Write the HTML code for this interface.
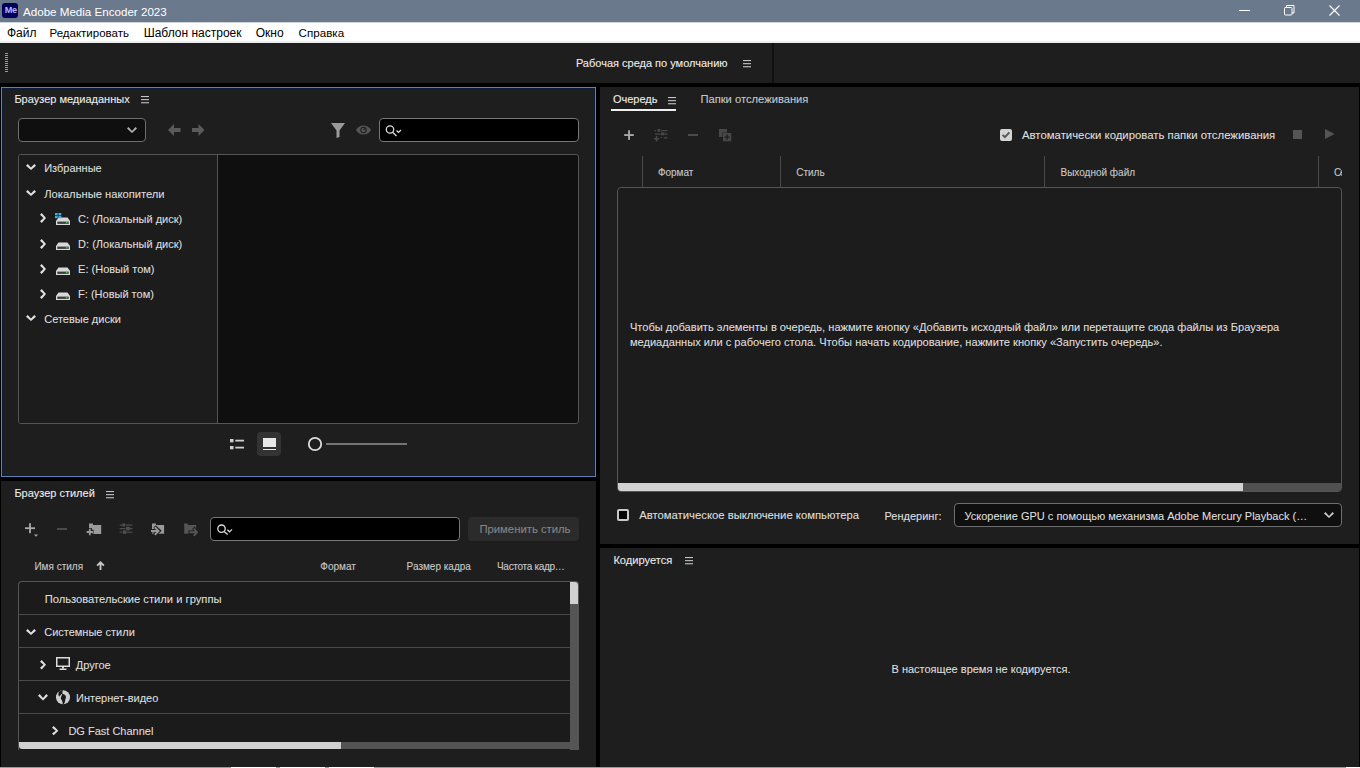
<!DOCTYPE html>
<html><head><meta charset="utf-8">
<style>
*{box-sizing:border-box;margin:0;padding:0}
html,body{width:1360px;height:768px;overflow:hidden;background:#000;font-family:"Liberation Sans",sans-serif;position:relative}
.a{position:absolute}
svg.a{overflow:visible}
.t{position:absolute;white-space:nowrap;color:#d8d8d8;font-size:11px;line-height:1;-webkit-text-stroke:0.1px currentColor}
.n{-webkit-text-stroke:0}
</style></head><body>
<div class="a" style="left:0px;top:0px;width:1360px;height:22px;background:#6b798d"></div>
<div class="a" style="left:2px;top:3px;width:16px;height:15px;background:#00005b;border-radius:3px"></div>
<div class="t n" style="left:4.7px;top:6.41px;font-size:9.2px;color:#b4b4ff;font-weight:bold;letter-spacing:-0.4px">Me</div>
<div class="t n" style="left:23px;top:5.78px;font-size:11.6px;color:#ffffff;">Adobe Media Encoder 2023</div>
<div class="a" style="left:1239px;top:10px;width:11px;height:1px;background:#fff"></div>
<svg class="a" style="left:1284px;top:5px;" width="11" height="11" viewBox="0 0 11 11"><rect x="0.5" y="2.5" width="7.5" height="7.5" rx="0.8" fill="none" stroke="#fff" stroke-width="1"/><path d="M2.5,2.5 V0.5 H10 V8 H8" fill="none" stroke="#fff" stroke-width="1"/></svg>
<svg class="a" style="left:1329px;top:5px;" width="11" height="11" viewBox="0 0 11 11"><path d="M0.5,0.5 L10.5,10.5 M10.5,0.5 L0.5,10.5" stroke="#fff" stroke-width="1.1"/></svg>
<div class="a" style="left:0px;top:22px;width:1360px;height:21px;background:#ffffff"></div>
<div class="a" style="left:0px;top:22px;width:1360px;height:1px;background:#d0d5db"></div>
<div class="a" style="left:0px;top:41px;width:1360px;height:2px;background:#eeeeee"></div>
<div class="t n" style="left:6.9px;top:26.74px;font-size:12px;color:#000;">Файл</div>
<div class="t n" style="left:49.5px;top:27.57px;font-size:11.5px;color:#000;">Редактировать</div>
<div class="t n" style="left:143.7px;top:26.74px;font-size:12px;color:#000;">Шаблон настроек</div>
<div class="t n" style="left:255.7px;top:26.74px;font-size:12px;color:#000;">Окно</div>
<div class="t n" style="left:298.59999999999997px;top:27.08px;font-size:11.6px;color:#000;">Справка</div>
<div class="a" style="left:0px;top:43px;width:1360px;height:40px;background:#1e1e1e"></div>
<div class="a" style="left:5px;top:53px;width:3px;height:1px;background:#9a9a9a"></div>
<div class="a" style="left:5px;top:55px;width:3px;height:1px;background:#9a9a9a"></div>
<div class="a" style="left:5px;top:57px;width:3px;height:1px;background:#9a9a9a"></div>
<div class="a" style="left:5px;top:59px;width:3px;height:1px;background:#9a9a9a"></div>
<div class="a" style="left:5px;top:61px;width:3px;height:1px;background:#9a9a9a"></div>
<div class="a" style="left:5px;top:63px;width:3px;height:1px;background:#9a9a9a"></div>
<div class="a" style="left:5px;top:65px;width:3px;height:1px;background:#9a9a9a"></div>
<div class="a" style="left:5px;top:67px;width:3px;height:1px;background:#9a9a9a"></div>
<div class="a" style="left:5px;top:69px;width:3px;height:1px;background:#9a9a9a"></div>
<div class="a" style="left:5px;top:71px;width:3px;height:1px;background:#9a9a9a"></div>
<div class="t " style="left:575.9px;top:57.59px;font-size:11px;color:#ececec;">Рабочая среда по умолчанию</div>
<svg class="a" style="left:743px;top:60px;" width="8" height="7" viewBox="0 0 8 7"><rect x="0" y="0" width="8" height="1.1" fill="#c4c4c4"/><rect x="0" y="3.1" width="8" height="1.1" fill="#c4c4c4"/><rect x="0" y="6.2" width="8" height="1.1" fill="#c4c4c4"/></svg>
<div class="a" style="left:772px;top:43px;width:2px;height:40px;background:#111"></div>
<div class="a" style="left:1px;top:87px;width:595px;height:390px;background:#1e1e1e;border:1px solid #5a82bd;box-shadow:inset 0 0 0 1px #0c1d3e"></div>
<div class="t " style="left:14.4px;top:93.59px;font-size:11px;color:#ececec;">Браузер медиаданных</div>
<svg class="a" style="left:141px;top:96px;" width="8" height="7" viewBox="0 0 8 7"><rect x="0" y="0" width="8" height="1.1" fill="#c4c4c4"/><rect x="0" y="3.1" width="8" height="1.1" fill="#c4c4c4"/><rect x="0" y="6.2" width="8" height="1.1" fill="#c4c4c4"/></svg>
<div class="a" style="left:18px;top:118px;width:128px;height:24px;background:#0f0f0f;border:1px solid #6e6e6e;border-radius:4px"></div>
<svg class="a" style="left:127px;top:127px;" width="10" height="6" viewBox="0 0 10 6"><path d="M0,1.44 L1.44,0 L5.0,3.912 L8.56,0 L10,1.44 L5.0,6 Z" fill="#b4b4b4"/></svg>
<svg class="a" style="left:168px;top:124px;" width="13" height="12" viewBox="0 0 13 12"><path d="M0,6 L6,0 L6,4 L12.5,4 L12.5,8 L6,8 L6,12 Z" fill="#5a5a5a"/></svg>
<svg class="a" style="left:192px;top:124px;" width="13" height="12" viewBox="0 0 13 12"><path d="M12.5,6 L6.5,0 L6.5,4 L0,4 L0,8 L6.5,8 L6.5,12 Z" fill="#5a5a5a"/></svg>
<svg class="a" style="left:331px;top:123px;" width="14" height="15" viewBox="0 0 14 15"><path d="M0,0 H14 L8.5,7.5 V14 L5.5,15 V7.5 Z" fill="#9a9a9a"/></svg>
<svg class="a" style="left:356px;top:125px;" width="15" height="10" viewBox="0 0 15 10"><path d="M0,5 C3,-1 12,-1 15,5 C12,11 3,11 0,5 Z" fill="#555"/><circle cx="7.5" cy="5" r="3.2" fill="#1e1e1e"/><circle cx="7.5" cy="5" r="2.2" fill="#555"/><circle cx="8.3" cy="4.2" r="0.9" fill="#1e1e1e"/></svg>
<div class="a" style="left:379px;top:118px;width:200px;height:24px;background:#000;border:1px solid #777;border-radius:4px"></div>
<svg class="a" style="left:385px;top:124px;" width="20" height="14" viewBox="0 0 20 14"><circle cx="5" cy="5.5" r="3.7" fill="none" stroke="#ddd" stroke-width="1.3"/><path d="M7.6,8.2 L11.5,12" stroke="#ddd" stroke-width="1.3"/><polyline points="11.5,6.5 13.5,8.5 16,6" fill="none" stroke="#ddd" stroke-width="1.2"/></svg>
<div class="a" style="left:18px;top:154px;width:561px;height:270px;background:#0f0f0f;border:1px solid #555;border-radius:3px;overflow:hidden"></div>
<div class="a" style="left:19px;top:155px;width:198px;height:268px;background:#1c1c1c;border-radius:3px 0 0 3px"></div>
<div class="a" style="left:217px;top:155px;width:1px;height:268px;background:#555"></div>
<svg class="a" style="left:26px;top:164px;" width="10" height="6" viewBox="0 0 10 6"><path d="M0,1.728 L1.728,0 L5.0,3.4944 L8.272,0 L10,1.728 L5.0,6 Z" fill="#e0e0e0"/></svg>
<div class="t " style="left:44.2px;top:162.69px;font-size:11px;color:#dedede;">Избранные</div>
<svg class="a" style="left:26px;top:190px;" width="10" height="6" viewBox="0 0 10 6"><path d="M0,1.728 L1.728,0 L5.0,3.4944 L8.272,0 L10,1.728 L5.0,6 Z" fill="#e0e0e0"/></svg>
<div class="t " style="left:44.2px;top:189.02px;font-size:11.2px;color:#dedede;">Локальные накопители</div>
<svg class="a" style="left:40px;top:213.4px;" width="6" height="10" viewBox="0 0 6 10"><path d="M1.728,0 L6,5.0 L1.728,10 L0,8.272 L3.4944,5.0 L0,1.728 Z" fill="#e0e0e0"/></svg>
<svg class="a" style="left:56px;top:216.9px;" width="14" height="8" viewBox="0 0 14 8"><path d="M2.5,0.5 H11.5 L14,4 V8 H0 V4 Z" fill="#d8d8d8"/><rect x="1.3" y="4.6" width="11.4" height="2.3" fill="#3c3c3c"/><rect x="9.8" y="5.1" width="1.6" height="1.3" fill="#4ed05e"/></svg>
<svg class="a" style="left:54.7px;top:212.6px;" width="7" height="6" viewBox="0 0 7 6"><g fill="#3aaedc"><rect x="0" y="0" width="2.7" height="2.3"/><rect x="3.4" y="0" width="2.9" height="2.3"/><rect x="0" y="2.9" width="2.7" height="2.3"/><rect x="3.4" y="2.9" width="2.9" height="2.3"/></g></svg>
<div class="t " style="left:78.1px;top:213.59px;font-size:11px;color:#dedede;">C: (Локальный диск)</div>
<svg class="a" style="left:40px;top:238.6px;" width="6" height="10" viewBox="0 0 6 10"><path d="M1.728,0 L6,5.0 L1.728,10 L0,8.272 L3.4944,5.0 L0,1.728 Z" fill="#e0e0e0"/></svg>
<svg class="a" style="left:56px;top:242.1px;" width="14" height="8" viewBox="0 0 14 8"><path d="M2.5,0.5 H11.5 L14,4 V8 H0 V4 Z" fill="#d8d8d8"/><rect x="1.3" y="4.6" width="11.4" height="2.3" fill="#3c3c3c"/><rect x="9.8" y="5.1" width="1.6" height="1.3" fill="#4ed05e"/></svg>
<div class="t " style="left:78.1px;top:238.79px;font-size:11px;color:#dedede;">D: (Локальный диск)</div>
<svg class="a" style="left:40px;top:263.8px;" width="6" height="10" viewBox="0 0 6 10"><path d="M1.728,0 L6,5.0 L1.728,10 L0,8.272 L3.4944,5.0 L0,1.728 Z" fill="#e0e0e0"/></svg>
<svg class="a" style="left:56px;top:267.3px;" width="14" height="8" viewBox="0 0 14 8"><path d="M2.5,0.5 H11.5 L14,4 V8 H0 V4 Z" fill="#d8d8d8"/><rect x="1.3" y="4.6" width="11.4" height="2.3" fill="#3c3c3c"/><rect x="9.8" y="5.1" width="1.6" height="1.3" fill="#4ed05e"/></svg>
<div class="t " style="left:78.1px;top:263.99px;font-size:11px;color:#dedede;">E: (Новый том)</div>
<svg class="a" style="left:40px;top:288.5px;" width="6" height="10" viewBox="0 0 6 10"><path d="M1.728,0 L6,5.0 L1.728,10 L0,8.272 L3.4944,5.0 L0,1.728 Z" fill="#e0e0e0"/></svg>
<svg class="a" style="left:56px;top:292px;" width="14" height="8" viewBox="0 0 14 8"><path d="M2.5,0.5 H11.5 L14,4 V8 H0 V4 Z" fill="#d8d8d8"/><rect x="1.3" y="4.6" width="11.4" height="2.3" fill="#3c3c3c"/><rect x="9.8" y="5.1" width="1.6" height="1.3" fill="#4ed05e"/></svg>
<div class="t " style="left:78.1px;top:288.69px;font-size:11px;color:#dedede;">F: (Новый том)</div>
<svg class="a" style="left:26px;top:315px;" width="10" height="6" viewBox="0 0 10 6"><path d="M0,1.728 L1.728,0 L5.0,3.4944 L8.272,0 L10,1.728 L5.0,6 Z" fill="#e0e0e0"/></svg>
<div class="t " style="left:44.2px;top:313.59px;font-size:11px;color:#dedede;">Сетевые диски</div>
<svg class="a" style="left:230px;top:439px;" width="15" height="11" viewBox="0 0 15 11"><rect x="0" y="0" width="3.5" height="3.3" fill="#d0d0d0"/><rect x="0" y="7" width="3.5" height="3.3" fill="#d0d0d0"/><rect x="5.3" y="0.7" width="8.7" height="1.8" fill="#d0d0d0"/><rect x="5.3" y="7.7" width="8.7" height="1.8" fill="#d0d0d0"/></svg>
<div class="a" style="left:257px;top:432px;width:24px;height:24px;background:#333;border-radius:4px"></div>
<div class="a" style="left:263px;top:438px;width:12.5px;height:9px;background:#e8e8e8"></div>
<div class="a" style="left:263px;top:448.5px;width:12.5px;height:1.8px;background:#e8e8e8"></div>
<svg class="a" style="left:307px;top:436px;" width="16" height="16" viewBox="0 0 16 16"><circle cx="8" cy="8" r="6.2" fill="none" stroke="#dcdcdc" stroke-width="1.8"/></svg>
<div class="a" style="left:326px;top:443px;width:81px;height:2px;background:#747474"></div>
<div class="a" style="left:1px;top:481px;width:595px;height:287px;background:#1e1e1e"></div>
<div class="t " style="left:14.4px;top:487.89px;font-size:11px;color:#ececec;">Браузер стилей</div>
<svg class="a" style="left:106px;top:490.6px;" width="8" height="7" viewBox="0 0 8 7"><rect x="0" y="0" width="8" height="1.1" fill="#c4c4c4"/><rect x="0" y="3.1" width="8" height="1.1" fill="#c4c4c4"/><rect x="0" y="6.2" width="8" height="1.1" fill="#c4c4c4"/></svg>
<svg class="a" style="left:25px;top:523px;" width="14" height="15" viewBox="0 0 14 15"><rect x="0" y="4.3" width="10" height="1.8" fill="#aaa"/><rect x="4.1" y="0.2" width="1.8" height="10" fill="#aaa"/><path d="M9,11.5 H13 L11,13.8 Z" fill="#aaa"/></svg>
<div class="a" style="left:57px;top:528.2px;width:10px;height:2px;background:#4a4a4a"></div>
<svg class="a" style="left:84px;top:518px;" width="120" height="24" viewBox="0 0 120 24"><g fill="#9a9a9a"><rect x="5" y="5.5" width="4" height="1.5"/><rect x="5" y="7" width="12.2" height="9" /></g><path d="M2,13.8 H9.5 M5.8,10 V17.6" stroke="#1e1e1e" stroke-width="4"/><path d="M2.6,14 H9 M5.8,10.8 V17.2" stroke="#9a9a9a" stroke-width="1.8"/><g fill="#4c4c4c"><rect x="35.7" y="6.5" width="12.7" height="1.2"/><rect x="35.7" y="10" width="12.7" height="1.2"/><rect x="35.7" y="13.6" width="12.7" height="1.2"/><rect x="38.4" y="5.2" width="2.8" height="3.6" fill="#1e1e1e"/><rect x="38.4" y="5.4" width="2.6" height="3.2"/><rect x="41.4" y="8.6" width="4.5" height="4" fill="#1e1e1e"/><rect x="41.9" y="8.8" width="4" height="3.6"/><rect x="38.3" y="12.1" width="4.3" height="4" fill="#1e1e1e"/><rect x="38.8" y="12.3" width="3.6" height="3.6"/></g><g fill="#9a9a9a"><rect x="68" y="5.5" width="4" height="1.5"/><rect x="68" y="7" width="12.1" height="8.7"/></g><path d="M66,12.8 H71.5 M70.5,8.5 L75.2,12.8 L70.5,17" stroke="#1e1e1e" stroke-width="3.4" fill="none"/><path d="M67,13 H73.5 M70.8,9.2 L74.6,13 L70.8,16.8" stroke="#9a9a9a" stroke-width="1.8" fill="none"/><g fill="#555"><rect x="100.2" y="5.5" width="3.6" height="1.5"/><rect x="100.2" y="7" width="12" height="8.7"/></g><path d="M104.5,14.2 H111.5 M109.3,9.8 L113.6,14.2 L109.3,18.6" stroke="#1e1e1e" stroke-width="3.4" fill="none"/><path d="M105.5,14.2 H112 M109.8,10.5 L113,14.2 L109.8,17.8" stroke="#555" stroke-width="1.9" fill="none"/></svg>
<div class="a" style="left:210px;top:517px;width:250px;height:24px;background:#000;border:1px solid #777;border-radius:4px"></div>
<svg class="a" style="left:216px;top:523px;" width="20" height="14" viewBox="0 0 20 14"><circle cx="5.5" cy="5.7" r="3.7" fill="none" stroke="#ddd" stroke-width="1.3"/><path d="M8.1,8.4 L11.7,11.5" stroke="#ddd" stroke-width="1.3"/><polyline points="11.3,6.8 13.5,8.8 16,6.3" fill="none" stroke="#ddd" stroke-width="1.2"/></svg>
<div class="a" style="left:468px;top:517px;width:111px;height:24px;background:#2b2b2b;border-radius:4px"></div>
<div class="t " style="left:479.4px;top:523.63px;font-size:11.3px;color:#858585;">Применить стиль</div>
<div class="t " style="left:34.4px;top:562.33px;font-size:10px;color:#c8c8c8;">Имя стиля</div>
<svg class="a" style="left:96px;top:561px;" width="9" height="10" viewBox="0 0 9 10"><path d="M4.5,0 L8.5,4 L7.2,5.2 L5.4,3.4 V9 H3.6 V3.4 L1.8,5.2 L0.5,4 Z" fill="#c8c8c8"/></svg>
<div class="t " style="left:320.3px;top:562.33px;font-size:10px;color:#c8c8c8;">Формат</div>
<div class="t " style="left:406.6px;top:562.33px;font-size:10px;color:#c8c8c8;">Размер кадра</div>
<div class="t " style="left:497px;top:562.33px;font-size:10px;color:#c8c8c8;letter-spacing:-0.3px">Частота кадр…</div>
<div class="a" style="left:18px;top:581px;width:561px;height:169px;background:#1b1b1b;border:1px solid #555;border-radius:4px 4px 0 0;border-bottom:none"></div>
<div class="a" style="left:19px;top:614px;width:551px;height:1px;background:#4a4a4a"></div>
<div class="a" style="left:19px;top:647px;width:551px;height:1px;background:#4a4a4a"></div>
<div class="a" style="left:19px;top:680px;width:551px;height:1px;background:#4a4a4a"></div>
<div class="a" style="left:19px;top:713px;width:551px;height:1px;background:#4a4a4a"></div>
<div class="t " style="left:44.7px;top:593.52px;font-size:11.2px;color:#dedede;">Пользовательские стили и группы</div>
<svg class="a" style="left:26px;top:629px;" width="10" height="6" viewBox="0 0 10 6"><path d="M0,1.728 L1.728,0 L5.0,3.4944 L8.272,0 L10,1.728 L5.0,6 Z" fill="#e0e0e0"/></svg>
<div class="t " style="left:44.2px;top:626.69px;font-size:11px;color:#dedede;">Системные стили</div>
<svg class="a" style="left:40px;top:659.5px;" width="6" height="9.5" viewBox="0 0 6 9.5"><path d="M1.728,0 L6,4.75 L1.728,9.5 L0,7.772 L3.4944,4.75 L0,1.728 Z" fill="#e0e0e0"/></svg>
<svg class="a" style="left:56px;top:657px;" width="14" height="13" viewBox="0 0 14 13"><rect x="0.75" y="0.75" width="12.5" height="8.5" fill="none" stroke="#dcdcdc" stroke-width="1.5"/><rect x="6" y="9.5" width="2" height="2" fill="#dcdcdc"/><rect x="3.5" y="11.5" width="7" height="1.5" fill="#dcdcdc"/></svg>
<div class="t " style="left:75.7px;top:659.89px;font-size:11px;color:#dedede;">Другое</div>
<svg class="a" style="left:38px;top:693.6px;" width="10" height="6.6" viewBox="0 0 10 6.6"><path d="M0,1.728 L1.728,0 L5.0,4.0944 L8.272,0 L10,1.728 L5.0,6.6 Z" fill="#e0e0e0"/></svg>
<svg class="a" style="left:56px;top:690px;" width="14" height="14" viewBox="0 0 14 14"><circle cx="7" cy="7.2" r="7" fill="#cfcfcf"/><path d="M2.8,1.8 C4.2,0.7 5.6,0.2 7,0.2 C6.5,1.2 6.2,2.2 6.6,3.2 C5.6,4.2 4.2,5 3,6.8 C2.3,5.2 2.2,3.5 2.8,1.8 Z" fill="#1b1b1b"/><path d="M5.8,3.6 C7.4,4.1 9.5,4.8 9.9,6.4 C10.3,8 9.1,9 9.2,10.6 C9.2,12 8.4,13.2 7.6,14.4 L6.6,14.4 C6.8,12.8 6.4,11.2 5.5,9.8 C4.7,8.6 4.6,7.2 5.4,6.2 C6,5.4 6.2,4.5 5.8,3.6 Z" fill="#1b1b1b"/></svg>
<div class="t " style="left:76px;top:692.69px;font-size:11px;color:#dedede;">Интернет-видео</div>
<svg class="a" style="left:52px;top:725.5px;" width="6.3" height="9.3" viewBox="0 0 6.3 9.3"><path d="M1.728,0 L6.3,4.65 L1.728,9.3 L0,7.572000000000001 L3.7944,4.65 L0,1.728 Z" fill="#e0e0e0"/></svg>
<div class="t " style="left:68.4px;top:725.69px;font-size:11px;color:#dedede;">DG Fast Channel</div>
<div class="a" style="left:570px;top:582px;width:8px;height:22px;background:#d0d0d0;border-radius:0 3px 0 0"></div>
<div class="a" style="left:570px;top:604px;width:8px;height:139px;background:#555"></div>
<div class="a" style="left:19px;top:742px;width:322px;height:7px;background:#d0d0d0;border-radius:0 0 0 3px"></div>
<div class="a" style="left:341px;top:742px;width:229px;height:7px;background:#535353"></div>
<div class="a" style="left:570px;top:742px;width:9px;height:8px;background:#555"></div>
<div class="a" style="left:600px;top:87px;width:759px;height:457px;background:#1e1e1e"></div>
<div class="t " style="left:612.9px;top:93.99px;font-size:11px;color:#ececec;">Очередь</div>
<svg class="a" style="left:668px;top:96.5px;" width="8" height="7" viewBox="0 0 8 7"><rect x="0" y="0" width="8" height="1.1" fill="#c4c4c4"/><rect x="0" y="3.1" width="8" height="1.1" fill="#c4c4c4"/><rect x="0" y="6.2" width="8" height="1.1" fill="#c4c4c4"/></svg>
<div class="a" style="left:611px;top:109px;width:65px;height:2px;background:#f0f0f0"></div>
<div class="t " style="left:700.4px;top:93.82px;font-size:11.2px;color:#c8c8c8;">Папки отслеживания</div>
<svg class="a" style="left:624px;top:130px;" width="10" height="10" viewBox="0 0 10 10"><rect x="0.2" y="4.1" width="9.6" height="1.9" fill="#a8a8a8"/><rect x="4.1" y="0.3" width="1.9" height="9.6" fill="#a8a8a8"/></svg>
<svg class="a" style="left:654px;top:129px;" width="14" height="13" viewBox="0 0 14 13"><g fill="#484848"><rect x="0.5" y="1" width="1.5" height="1.2"/><rect x="3.5" y="0" width="2.7" height="2.8"/><rect x="7" y="1" width="6.4" height="1.2"/><rect x="1" y="4.4" width="5.5" height="1.3"/><rect x="7" y="3.4" width="3.5" height="2.8"/><rect x="11" y="4.4" width="2.4" height="1.3"/><rect x="0" y="9" width="5" height="1.6"/><rect x="1.7" y="7" width="1.6" height="5.5"/><rect x="6.5" y="8" width="1.3" height="1.3"/><rect x="9.8" y="8.2" width="3.6" height="1.3"/></g></svg>
<div class="a" style="left:688.4px;top:133.9px;width:9.2px;height:2px;background:#4a4a4a"></div>
<svg class="a" style="left:719px;top:129px;" width="13" height="13" viewBox="0 0 13 13"><path d="M0,0 H8 V3.5 H3.5 V8 H0 Z" fill="#474747"/><rect x="4" y="4" width="8.3" height="8.3" fill="#474747"/><path d="M8.15,5.6 V10.7 M5.6,8.15 H10.7" stroke="#1e1e1e" stroke-width="1.2"/></svg>
<div class="a" style="left:1000px;top:129px;width:12px;height:12px;background:#d4d4d4;border-radius:2px"></div>
<svg class="a" style="left:1002px;top:131px;" width="8" height="8" viewBox="0 0 8 8"><polyline points="0.6,3.8 2.9,6.2 7.4,1.3" fill="none" stroke="#555" stroke-width="1.9"/></svg>
<div class="t " style="left:1022px;top:130.38px;font-size:11.37px;color:#dedede;">Автоматически кодировать папки отслеживания</div>
<div class="a" style="left:1293px;top:130px;width:9px;height:9px;background:#555"></div>
<svg class="a" style="left:1325px;top:129px;" width="10" height="10" viewBox="0 0 10 10"><path d="M0,0 L9.5,5 L0,10 Z" fill="#555"/></svg>
<div class="a" style="left:642px;top:156px;width:1px;height:31px;background:#4a4a4a"></div>
<div class="a" style="left:780px;top:156px;width:1px;height:31px;background:#4a4a4a"></div>
<div class="a" style="left:1044px;top:156px;width:1px;height:31px;background:#4a4a4a"></div>
<div class="a" style="left:1318px;top:156px;width:1px;height:31px;background:#4a4a4a"></div>
<div class="t " style="left:657.9px;top:167.53px;font-size:10px;color:#c8c8c8;">Формат</div>
<div class="t " style="left:796.2px;top:167.53px;font-size:10px;color:#c8c8c8;">Стиль</div>
<div class="t " style="left:1060.5px;top:167.53px;font-size:10px;color:#c8c8c8;">Выходной файл</div>
<div class="a" style="left:1333px;top:160px;width:9px;height:22px;overflow:hidden">
<div class="t" style="left:0.9px;top:7.53px;font-size:10px;color:#c8c8c8;letter-spacing:-1px">Се</div></div>
<div class="a" style="left:617px;top:187px;width:725px;height:305px;background:#1c1c1c;border:1px solid #555;border-radius:4px"></div>
<div class="t " style="left:629.9px;top:321.50px;font-size:11.1px;color:#dedede;">Чтобы добавить элементы в очередь, нажмите кнопку «Добавить исходный файл» или перетащите сюда файлы из Браузера</div>
<div class="t " style="left:629.9px;top:337.00px;font-size:11.1px;color:#dedede;">медиаданных или с рабочего стола. Чтобы начать кодирование, нажмите кнопку «Запустить очередь».</div>
<div class="a" style="left:618px;top:483px;width:625px;height:8px;background:#d2d2d2;border-radius:0 0 0 3px"></div>
<div class="a" style="left:1243px;top:483px;width:98px;height:8px;background:#505050;border-radius:0 0 3px 0"></div>
<div class="a" style="left:617px;top:509px;width:12px;height:12px;background:#000;border:2px solid #c8c8c8;border-radius:2px"></div>
<div class="t " style="left:639.2px;top:509.83px;font-size:11.3px;color:#dedede;">Автоматическое выключение компьютера</div>
<div class="t " style="left:884.5px;top:510.59px;font-size:11px;color:#dedede;">Рендеринг:</div>
<div class="a" style="left:954px;top:503px;width:388px;height:24px;background:#0f0f0f;border:1px solid #6e6e6e;border-radius:4px"></div>
<div class="t " style="left:964.5px;top:510.59px;font-size:11px;color:#dedede;">Ускорение GPU с помощью механизма Adobe Mercury Playback (…</div>
<svg class="a" style="left:1323.5px;top:512px;" width="10" height="6" viewBox="0 0 10 6"><path d="M0,1.44 L1.44,0 L5.0,3.912 L8.56,0 L10,1.44 L5.0,6 Z" fill="#c8c8c8"/></svg>
<div class="a" style="left:600px;top:548px;width:759px;height:219px;background:#1e1e1e"></div>
<div class="t " style="left:613.4px;top:555.20px;font-size:11.1px;color:#ececec;">Кодируется</div>
<svg class="a" style="left:685px;top:557px;" width="8" height="7" viewBox="0 0 8 7"><rect x="0" y="0" width="8" height="1.1" fill="#c4c4c4"/><rect x="0" y="3.1" width="8" height="1.1" fill="#c4c4c4"/><rect x="0" y="6.2" width="8" height="1.1" fill="#c4c4c4"/></svg>
<div class="t " style="left:891.5px;top:663.59px;font-size:11px;color:#dedede;">В настоящее время не кодируется.</div>
<div class="a" style="left:0px;top:767px;width:1360px;height:1px;background:#9c9c9c"></div>
<div class="a" style="left:231px;top:767px;width:45px;height:1px;background:#fff"></div>
<div class="a" style="left:280px;top:767px;width:45px;height:1px;background:#fff"></div>
<div class="a" style="left:329px;top:767px;width:45px;height:1px;background:#fff"></div>
<div class="a" style="left:1346px;top:767px;width:14px;height:1px;background:#fff"></div>
</body></html>
